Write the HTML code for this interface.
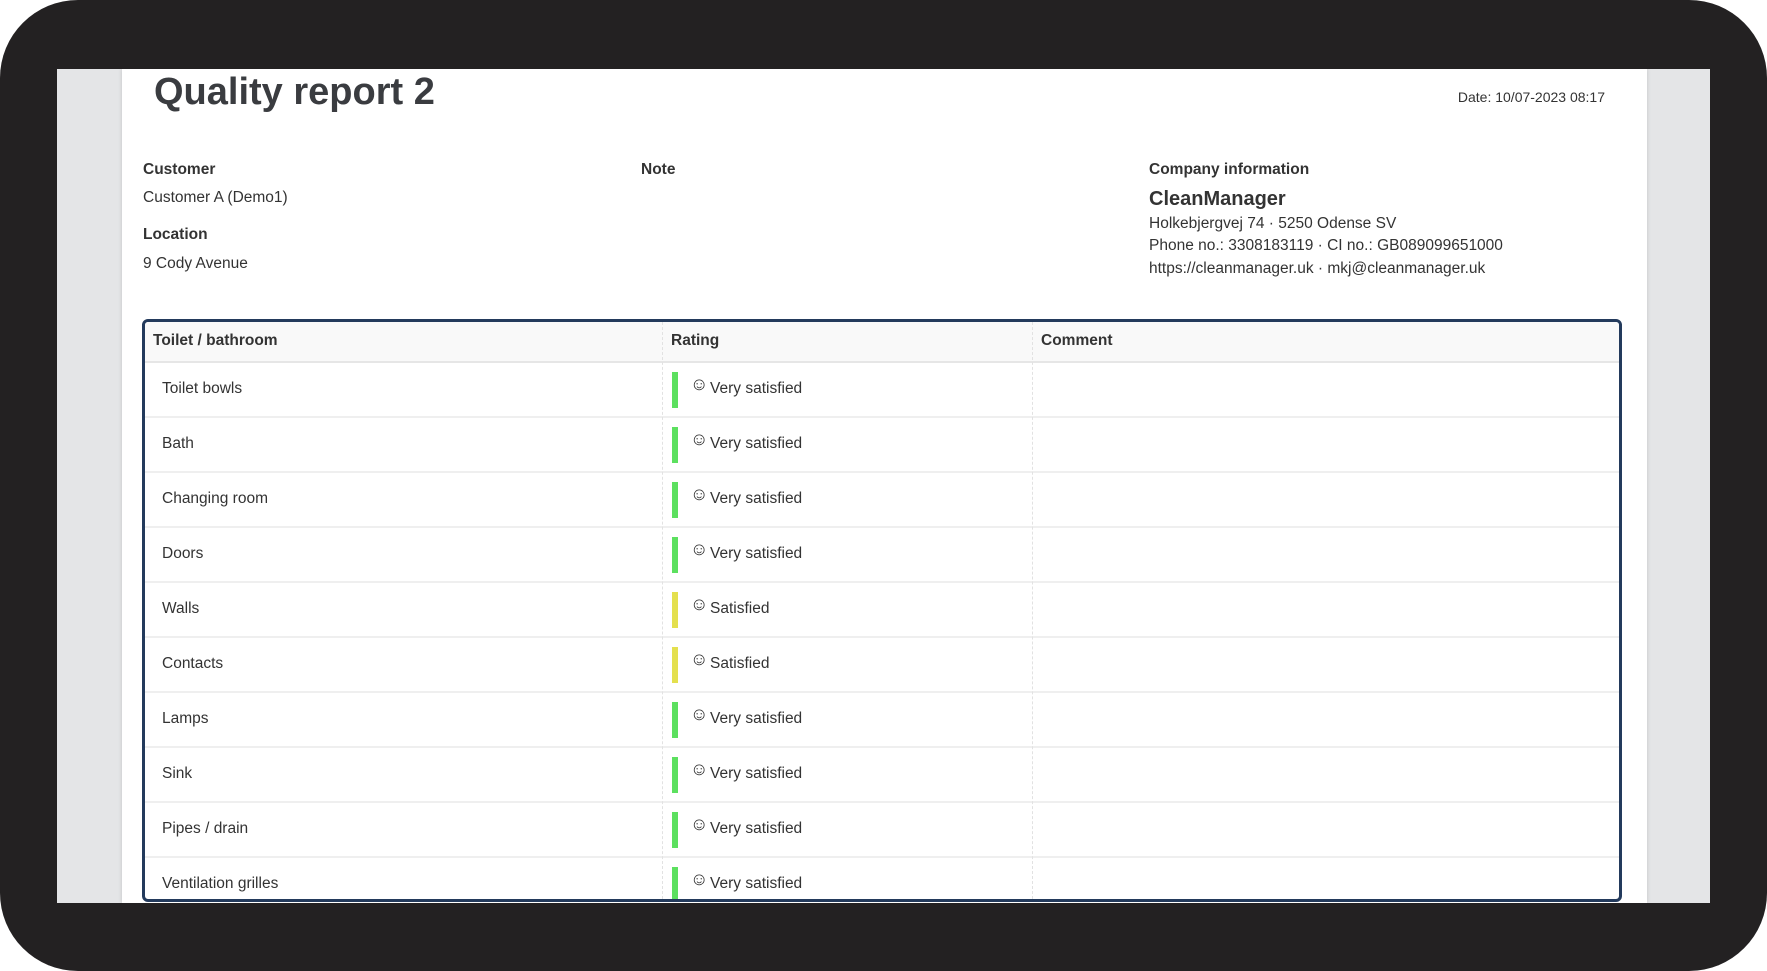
<!DOCTYPE html>
<html><head><meta charset="utf-8"><style>
html,body{margin:0;padding:0;background:#fff;width:1767px;height:971px;overflow:hidden;font-family:"Liberation Sans",Arial,sans-serif;color:#333}
.frame{position:absolute;left:0;top:0;width:1767px;height:971px;background:#232122;border-radius:78px;overflow:hidden}
.screen{position:absolute;left:57px;top:69px;width:1653px;height:834px;background:#e4e5e7;overflow:hidden}
.page{position:absolute;left:65px;top:0;width:1525px;height:834px;background:#fff;box-shadow:0 0 4px rgba(0,0,0,.15);overflow:hidden}
.a{position:absolute;white-space:nowrap}
.t{position:absolute;left:20px;top:250px;width:1474px;height:577px;border:3px solid #233a5c;border-radius:6px;overflow:hidden;background:#fff}
.hd{position:absolute;left:0;top:0;width:100%;height:39px;background:#f9f9f9;border-bottom:2px solid #e6e6e6;font-weight:bold;font-size:15.5px;color:#333}
.row{position:absolute;left:0;width:100%;height:53px;border-bottom:2px solid #efefef;font-size:15.5px;color:#333}
.row>.a{left:17px;top:17px}
.vl{position:absolute;top:0;bottom:0;width:0;border-left:1px dashed #e2e2e2}
.bar{position:absolute;left:527px;top:9px;width:6px;height:36px}
.g{background:#5ce05f}.y{background:#e4e04e}
.s{position:absolute;left:545px;top:11px;font-size:18px}
.r{position:absolute;left:565px;top:17px}
</style></head><body>
<div class="frame"><div class="screen"><div class="page">
<div class="a" style="left:32px;top:2px;font-size:38px;font-weight:bold;color:#3a3c40">Quality report 2</div>
<div class="a" style="right:42px;top:20px;font-size:14px;color:#333">Date: 10/07-2023 08:17</div>
<div class="a" style="left:21px;top:92px;font-size:15.5px;font-weight:bold">Customer</div>
<div class="a" style="left:21px;top:120px;font-size:15.5px">Customer A (Demo1)</div>
<div class="a" style="left:21px;top:157px;font-size:15.5px;font-weight:bold">Location</div>
<div class="a" style="left:21px;top:186px;font-size:15.5px">9 Cody Avenue</div>
<div class="a" style="left:519px;top:92px;font-size:15.5px;font-weight:bold">Note</div>
<div class="a" style="left:1027px;top:92px;font-size:15.5px;font-weight:bold">Company information</div>
<div class="a" style="left:1027px;top:119px;font-size:20px;font-weight:bold">CleanManager</div>
<div class="a" style="left:1027px;top:146px;font-size:15.5px">Holkebjergvej 74 · 5250 Odense SV</div>
<div class="a" style="left:1027px;top:168px;font-size:15.5px">Phone no.: 3308183119 · CI no.: GB089099651000</div>
<div class="a" style="left:1027px;top:191px;font-size:15.5px">https://cleanmanager.uk · mkj@cleanmanager.uk</div>
<div class="t">
<div class="hd"><span class="a" style="left:8px;top:10px">Toilet / bathroom</span><span class="a" style="left:526px;top:10px">Rating</span><span class="a" style="left:896px;top:10px">Comment</span></div>
<div style="position:absolute;left:0;top:41px;width:100%;height:600px">
<div class="row" style="top:0"><span class="a">Toilet bowls</span><div class="bar g"></div><span class="s">☺</span><span class="r">Very satisfied</span></div>
<div class="row" style="top:55px"><span class="a">Bath</span><div class="bar g"></div><span class="s">☺</span><span class="r">Very satisfied</span></div>
<div class="row" style="top:110px"><span class="a">Changing room</span><div class="bar g"></div><span class="s">☺</span><span class="r">Very satisfied</span></div>
<div class="row" style="top:165px"><span class="a">Doors</span><div class="bar g"></div><span class="s">☺</span><span class="r">Very satisfied</span></div>
<div class="row" style="top:220px"><span class="a">Walls</span><div class="bar y"></div><span class="s">☺</span><span class="r">Satisfied</span></div>
<div class="row" style="top:275px"><span class="a">Contacts</span><div class="bar y"></div><span class="s">☺</span><span class="r">Satisfied</span></div>
<div class="row" style="top:330px"><span class="a">Lamps</span><div class="bar g"></div><span class="s">☺</span><span class="r">Very satisfied</span></div>
<div class="row" style="top:385px"><span class="a">Sink</span><div class="bar g"></div><span class="s">☺</span><span class="r">Very satisfied</span></div>
<div class="row" style="top:440px"><span class="a">Pipes / drain</span><div class="bar g"></div><span class="s">☺</span><span class="r">Very satisfied</span></div>
<div class="row" style="top:495px"><span class="a">Ventilation grilles</span><div class="bar g"></div><span class="s">☺</span><span class="r">Very satisfied</span></div>
</div>
<div class="vl" style="left:517px"></div>
<div class="vl" style="left:887px"></div>
</div>
</div></div></div>
</body></html>
